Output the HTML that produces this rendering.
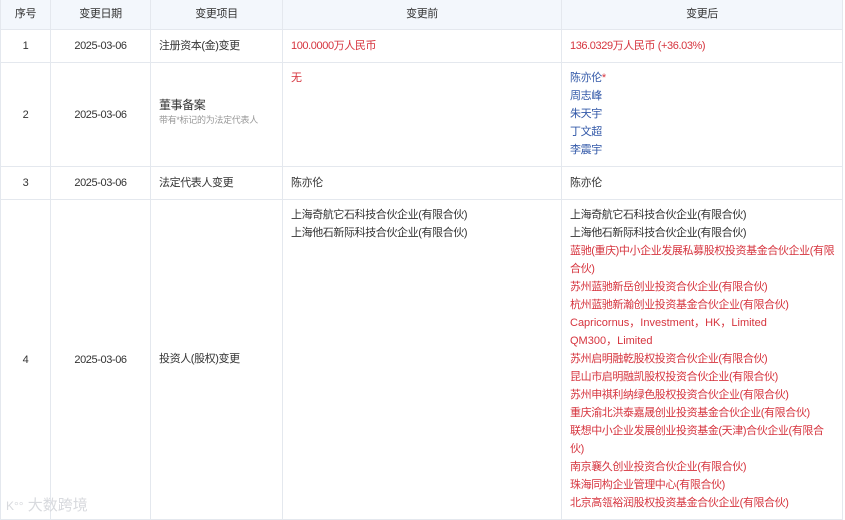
<!DOCTYPE html>
<html><head><meta charset="utf-8"><style>
body{margin:0;width:845px;height:520px;background:#fff;overflow:hidden;font-family:"Liberation Sans","Noto Sans CJK SC",sans-serif;font-size:11px;letter-spacing:-0.4px;color:#333;position:relative}
.c{position:absolute;box-sizing:border-box;border-right:1px solid #e4e8ee;border-bottom:1px solid #e4e8ee;white-space:nowrap}
.h{background:#f3f7fc;text-align:center;line-height:29px;color:#333}
.m{text-align:center;display:flex;align-items:center;justify-content:center}
.t{padding:6px 8px;line-height:18px}
.r{color:#d6343e}.b{color:#3258a8}
.l{letter-spacing:0}
.s{font-size:9px;color:#999;line-height:13px;letter-spacing:-0.3px}
</style></head><body>
<div class="c h" style="left:0;top:0;width:51px;height:30px;border-left:1px solid #e4e8ee">序号</div>
<div class="c h" style="left:51px;top:0;width:100px;height:30px">变更日期</div>
<div class="c h" style="left:151px;top:0;width:132px;height:30px">变更项目</div>
<div class="c h" style="left:283px;top:0;width:279px;height:30px">变更前</div>
<div class="c h" style="left:562px;top:0;width:281px;height:30px">变更后</div>

<div class="c m" style="left:0;top:30px;width:51px;height:33px;border-left:1px solid #e4e8ee">1</div>
<div class="c m" style="left:51px;top:30px;width:100px;height:33px">2025-03-06</div>
<div class="c" style="left:151px;top:30px;width:132px;height:33px;padding:7px 8px;line-height:18px">注册资本(金)变更</div>
<div class="c t r" style="left:283px;top:30px;width:279px;height:33px;padding-top:7px">100.0000万人民币</div>
<div class="c t r" style="left:562px;top:30px;width:281px;height:33px;padding-top:7px">136.0329万人民币 (+36.03%)</div>

<div class="c m" style="left:0;top:63px;width:51px;height:104px;border-left:1px solid #e4e8ee">2</div>
<div class="c m" style="left:51px;top:63px;width:100px;height:104px">2025-03-06</div>
<div class="c" style="left:151px;top:63px;width:132px;height:104px;padding:33px 8px 0"><div style="font-size:12px;line-height:18px">董事备案</div><div class="s">带有*标记的为法定代表人</div></div>
<div class="c t r" style="left:283px;top:63px;width:279px;height:104px">无</div>
<div class="c t b" style="left:562px;top:63px;width:281px;height:104px">陈亦伦<span class="r">*</span><br>周志峰<br>朱天宇<br>丁文超<br>李震宇</div>

<div class="c m" style="left:0;top:167px;width:51px;height:33px;border-left:1px solid #e4e8ee">3</div>
<div class="c m" style="left:51px;top:167px;width:100px;height:33px">2025-03-06</div>
<div class="c" style="left:151px;top:167px;width:132px;height:33px;padding:7px 8px;line-height:18px">法定代表人变更</div>
<div class="c t" style="left:283px;top:167px;width:279px;height:33px;padding-top:7px">陈亦伦</div>
<div class="c t" style="left:562px;top:167px;width:281px;height:33px;padding-top:7px">陈亦伦</div>

<div class="c m" style="left:0;top:200px;width:51px;height:320px;border-left:1px solid #e4e8ee">4</div>
<div class="c m" style="left:51px;top:200px;width:100px;height:320px">2025-03-06</div>
<div class="c" style="left:151px;top:200px;width:132px;height:320px;padding:150px 8px 0;line-height:18px">投资人(股权)变更</div>
<div class="c t" style="left:283px;top:200px;width:279px;height:320px">上海奇航它石科技合伙企业(有限合伙)<br>上海他石新际科技合伙企业(有限合伙)</div>
<div class="c t" style="left:562px;top:200px;width:281px;height:320px">上海奇航它石科技合伙企业(有限合伙)<br>上海他石新际科技合伙企业(有限合伙)<br><span class="r">蓝驰(重庆)中小企业发展私募股权投资基金合伙企业(有限<br>合伙)<br>苏州蓝驰新岳创业投资合伙企业(有限合伙)<br>杭州蓝驰新瀚创业投资基金合伙企业(有限合伙)<br><span class="l">Capricornus，Investment，HK，Limited</span><br><span class="l">QM300，Limited</span><br>苏州启明融乾股权投资合伙企业(有限合伙)<br>昆山市启明融凯股权投资合伙企业(有限合伙)<br>苏州申祺利纳绿色股权投资合伙企业(有限合伙)<br>重庆渝北洪泰嘉晟创业投资基金合伙企业(有限合伙)<br>联想中小企业发展创业投资基金(天津)合伙企业(有限合<br>伙)<br>南京襄久创业投资合伙企业(有限合伙)<br>珠海同构企业管理中心(有限合伙)<br>北京高瓴裕润股权投资基金合伙企业(有限合伙)</span></div>

<div style="position:absolute;left:6px;top:494px;color:#d8dade;font-size:15px;letter-spacing:0"><span style="font-size:12px">K°°</span> 大数跨境</div>
</body></html>
